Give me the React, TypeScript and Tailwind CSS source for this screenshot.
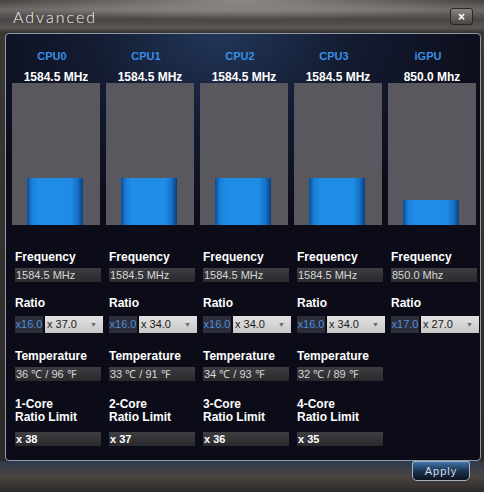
import React from 'react';

type Unit = {
  name: string;
  mhz: string;
  bar: number;
  base: string;
  ratio: string;
  temp?: string;
  coreLabel?: string;
  limit?: string;
};

const UNITS: Unit[] = [
  { name: 'CPU0', mhz: '1584.5 MHz', bar: 47, base: 'x16.0', ratio: 'x 37.0', temp: '36 ℃ / 96 ℉', coreLabel: '1-Core', limit: 'x 38' },
  { name: 'CPU1', mhz: '1584.5 MHz', bar: 47, base: 'x16.0', ratio: 'x 34.0', temp: '33 ℃ / 91 ℉', coreLabel: '2-Core', limit: 'x 37' },
  { name: 'CPU2', mhz: '1584.5 MHz', bar: 47, base: 'x16.0', ratio: 'x 34.0', temp: '34 ℃ / 93 ℉', coreLabel: '3-Core', limit: 'x 36' },
  { name: 'CPU3', mhz: '1584.5 MHz', bar: 47, base: 'x16.0', ratio: 'x 34.0', temp: '32 ℃ / 89 ℉', coreLabel: '4-Core', limit: 'x 35' },
  { name: 'iGPU', mhz: '850.0 Mhz', bar: 25, base: 'x17.0', ratio: 'x 27.0' },
];

const Field: React.FC<{ children: React.ReactNode; bold?: boolean }> = ({ children, bold }) => (
  <div
    className={`h-[14px] w-[86px] bg-gradient-to-b from-[#3e3e42] to-[#2a2a2e] pl-[1px] text-[11px] leading-[14px] whitespace-nowrap ${
      bold ? 'font-bold text-white' : 'text-[#d6d6d6]'
    }`}
  >
    {children}
  </div>
);

const Column: React.FC<{ unit: Unit }> = ({ unit }) => (
  <div className="flex w-[88px] flex-col">
    {/* header */}
    <div className="mt-[16px] h-[13px] pr-[8px] text-center text-[11px] font-bold leading-[13px] text-[#3b8ee6]">
      {unit.name}
    </div>
    <div className="mt-[9px] h-[11px] text-center text-[12px] font-bold leading-[11px] text-white whitespace-nowrap">
      {unit.mhz}
    </div>

    {/* usage bar */}
    <div className="flex h-[142px] items-end bg-[#58585e]">
      <div
        className="ml-[15px] w-[56px] bg-[linear-gradient(to_right,#0b4d94_0%,#1a7fd8_9%,#1f8ce6_20%,#1f8ce6_78%,#1672c8_90%,#0a3f7c_100%)]"
        style={{ height: unit.bar }}
      />
    </div>

    {/* details */}
    <div className="flex flex-col pl-[3px]">
      <div className="mt-[25px] text-[12px] font-bold leading-[14px] text-white">Frequency</div>
      <div className="mt-[4px]">
        <Field>{unit.mhz}</Field>
      </div>

      <div className="mt-[14px] text-[12px] font-bold leading-[14px] text-white">Ratio</div>
      <div className="mt-[6px] flex h-[17px] w-[88px] gap-[2px] text-[11px] leading-[17px]">
        <div className="w-[28px] bg-[#2c2e3a] text-center text-[#4f8fdc]">{unit.base}</div>
        <div className="flex w-[58px] items-center justify-between bg-gradient-to-b from-[#e2e2e2] to-[#c8c8c8] pl-[2px] pr-[6px] text-[#1a1a1a]">
          <span>{unit.ratio}</span>
          <span className="text-[7px] text-[#6a6a6a]">▼</span>
        </div>
      </div>

      {unit.temp && (
        <>
          <div className="mt-[16px] text-[12px] font-bold leading-[14px] text-white">Temperature</div>
          <div className="mt-[4px]">
            <Field>{unit.temp}</Field>
          </div>

          <div className="mt-[17px] text-[12px] font-bold leading-[13px] text-white">
            {unit.coreLabel}
            <br />
            Ratio Limit
          </div>
          <div className="mt-[8px]">
            <Field bold>{unit.limit}</Field>
          </div>
        </>
      )}
    </div>
  </div>
);

export default function App() {
  return (
    <div className="flex h-[492px] w-[484px] flex-col overflow-hidden bg-gradient-to-b from-[#3c3836] via-[#34302e] to-[#2c2826] font-['Liberation_Sans',Arial,sans-serif]">
      {/* Title bar */}
      <div className="flex h-[33px] shrink-0 items-start justify-between bg-[radial-gradient(ellipse_55%_60%_at_50%_0%,rgba(200,198,196,0.55),transparent),linear-gradient(to_bottom,#3f3b39_0%,#6e6a68_30%,#5a5654_46%,#4a4644_60%,#5a5654_85%,#35312f_100%)]">
        <div className="ml-[13px] mt-[8px] font-['Lato','Open_Sans',sans-serif] text-[16px] font-light leading-[18px] tracking-[2px] text-[#f2f2f2]">
          Advanced
        </div>
        <button className="mr-[11px] mt-[8px] flex h-[17px] w-[23px] items-center justify-center rounded-[3px] border border-[#2a2624] bg-gradient-to-b from-[#8a8684] to-[#4a4644] text-[12px] font-bold leading-none text-white">
          ×
        </button>
      </div>

      {/* Main panel */}
      <div className="ml-[5px] flex h-[428px] w-[476px] shrink-0 gap-[6px] rounded-[4px] border border-[#8d9aab] bg-[radial-gradient(ellipse_60%_45%_at_45%_0%,#213658_0%,#141c32_45%,#0b0c18_100%)] pl-[6px]">
        {UNITS.map((u) => (
          <Column key={u.name} unit={u} />
        ))}
      </div>

      {/* Footer */}
      <div className="flex flex-1 justify-end bg-gradient-to-b from-[#2d3a4c] via-[#4a4440] to-[#2e2a28] pr-[14px]">
        <button className="h-[20px] w-[58px] rounded-b-[5px] rounded-t-[2px] border border-[#a9b2bc] bg-gradient-to-b from-[#3f74a8] via-[#1d3452] to-[#0c1422] text-[11px] leading-[18px] tracking-[1px] text-[#d4dbe2]">
          Apply
        </button>
      </div>
    </div>
  );
}
